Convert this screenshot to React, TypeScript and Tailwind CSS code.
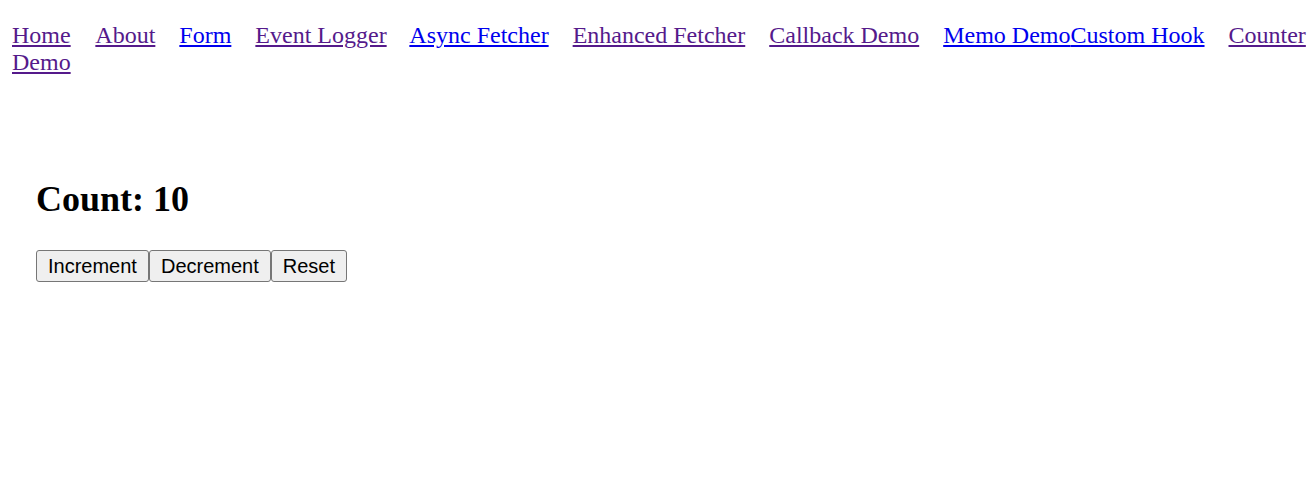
import React from "react";

const links: { label: string; visited: boolean; gap: boolean }[] = [
  { label: "Home", visited: true, gap: true },
  { label: "About", visited: true, gap: true },
  { label: "Form", visited: false, gap: true },
  { label: "Event Logger", visited: true, gap: true },
  { label: "Async Fetcher", visited: false, gap: true },
  { label: "Enhanced Fetcher", visited: true, gap: true },
  { label: "Callback Demo", visited: true, gap: true },
  { label: "Memo Demo", visited: false, gap: false },
  { label: "Custom Hook", visited: false, gap: true },
  { label: "Counter Demo", visited: true, gap: false },
];

export default function App() {
  return (
    <div className="m-[12px] bg-white font-['Liberation_Serif',serif] text-[24px] leading-[27px] text-black">
      <nav className="mt-[22px] w-[1296px]">
        {links.map((l, i) => (
          <React.Fragment key={l.label}>
            <a
              href="#"
              className={`underline ${l.visited ? "text-[#551a8b]" : "text-[#0000ee]"} ${l.gap ? (i === 0 ? "mr-[20px]" : "mr-[18px]") : ""}`}
            >
              {l.label}
            </a>
            {l.gap ? " " : ""}
          </React.Fragment>
        ))}
      </nav>
      <div className="p-[24px] mt-[49px]">
        <h2 className="font-bold text-[36px] leading-[41px] mt-[30px] mb-[30px]">Count: 10</h2>
        <div className="flex font-['Liberation_Sans',Arial,sans-serif] text-[20px] leading-[23px]">
          <button className="h-[32px] px-[11px] bg-[#efefef] border-[1.5px] border-[#767676] rounded-[3px] text-black">Increment</button>
          <button className="h-[32px] px-[11px] bg-[#efefef] border-[1.5px] border-[#767676] rounded-[3px] text-black">Decrement</button>
          <button className="h-[32px] px-[11px] bg-[#efefef] border-[1.5px] border-[#767676] rounded-[3px] text-black">Reset</button>
        </div>
      </div>
    </div>
  );
}
